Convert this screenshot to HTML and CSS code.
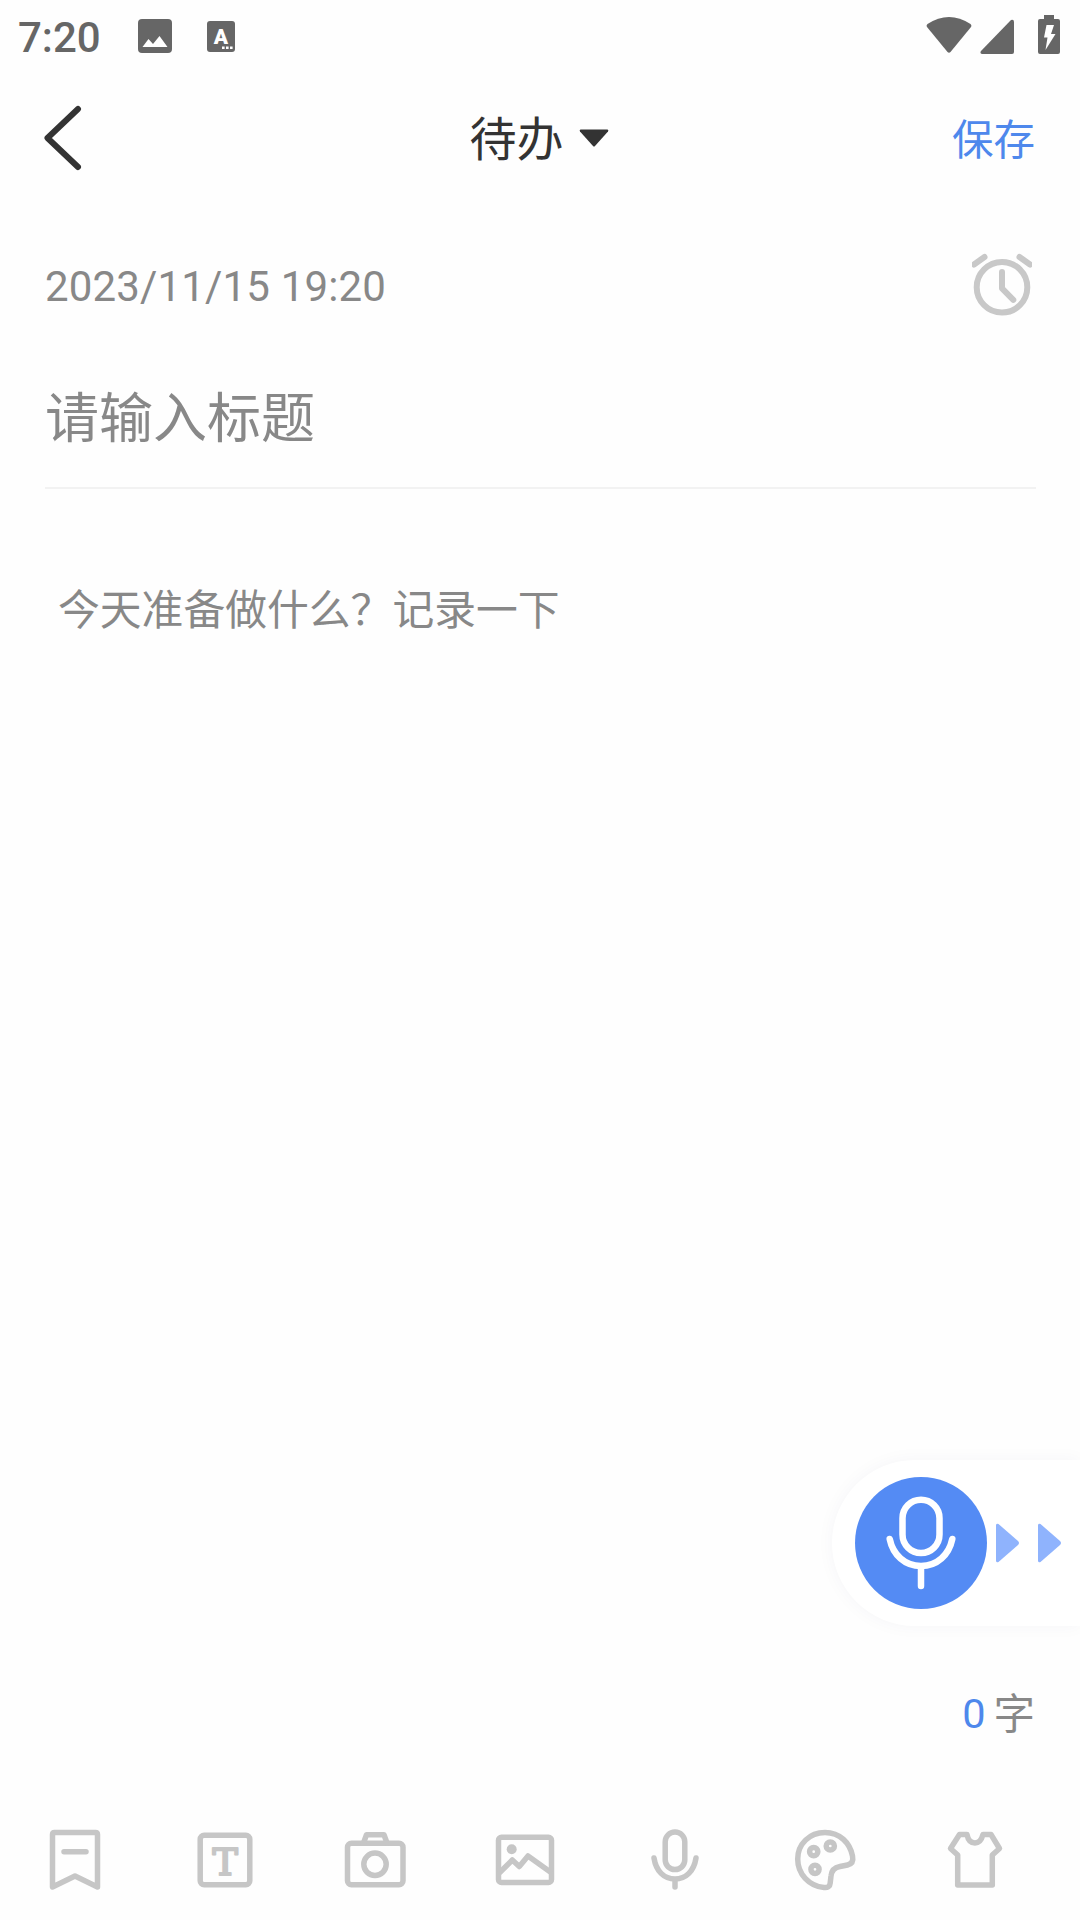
FILE: index.html
```html
<!DOCTYPE html>
<html lang="zh-CN">
<head>
    <meta charset="UTF-8">
    <meta name="viewport" content="width=device-width, initial-scale=1.0">
    <title>待办</title>
    <link rel="stylesheet" href="styles.css">
</head>
<body>

<div class="status-bar">
    <span class="time">7:20</span>
    <svg class="status-image" width="34" height="34" viewBox="0 0 34 34">
        <rect width="34" height="34" rx="4" fill="#666"/>
        <path d="M4.5 28 L10.5 20 L15 25 L21.5 17 L29.5 28 Z" fill="#fff"/>
    </svg>
    <svg class="status-input" width="28" height="31" viewBox="0 0 28 31">
        <rect width="28" height="31" rx="3" fill="#666"/>
        <text x="14" y="22.5" class="letter-a">A</text>
        <path d="M15 25.5h2.6v2.6H15z M19 25.5h2.6v2.6H19z M23 25.5h2.6v2.6H23z" fill="#fff"/>
    </svg>
    <div class="status-right">
        <svg width="46" height="38" viewBox="0 0 46 38">
            <path d="M1.5 8 Q23 -6 44.5 8 Q46 9.500 45 11 L24.500 36 Q23 37.500 21.500 36 L1 11 Q0 9.500 1.500 8 Z" fill="#666"/>
        </svg>
        <svg width="34" height="36" viewBox="0 0 34 36">
            <path d="M1 33 L31 2 Q34 1 34 4 V34 Q34 36 32 36 H2 Q-0.500 35.500 1 33 Z" fill="#666"/>
        </svg>
        <svg class="battery" width="22" height="39" viewBox="0 0 22 39">
            <path d="M6 0 H16 V4 H20 Q22 4 22 6 V37 Q22 39 20 39 H2 Q0 39 0 37 V6 Q0 4 2 4 H6 Z" fill="#666"/>
            <path d="M8.500 10 H16 L13 19 H17.500 L7.500 35 L9.500 22.500 H6 Z" fill="#fff"/>
        </svg>
    </div>
</div>

<div class="header">
    <svg class="back" width="40" height="66" viewBox="0 0 40 66">
        <path d="M35 4 L4.500 33 L35 62"/>
    </svg>
    <div class="category">
        <span class="name">待办</span>
        <svg width="30" height="18" viewBox="0 0 30 18">
            <path d="M1.500 0.500 H28.500 Q30 1 29 2.500 L16 17 Q15 18 14 17 L1 2.500 Q0 1 1.500 0.500 Z" fill="#333"/>
        </svg>
    </div>
    <span class="save">保存</span>
</div>

<div class="editor">
    <div class="date-row">
        <span class="date">2023/11/15 19:20</span>
        <svg class="alarm" width="60" height="70" viewBox="0 0 60 70">
            <circle cx="30" cy="35.300" r="25.300"/>
            <path d="M30 20 V36.300 L41.300 47.800"/>
            <path d="M2 12.500 L12.500 5 M47.500 5 L58 12.500"/>
        </svg>
    </div>
    <div class="title-input">请输入标题</div>
    <div class="content-input">今天准备做什么？记录一下</div>
</div>

<div class="voice">
    <div class="voice-btn">
        <svg width="132" height="132" viewBox="0 0 132 132">
            <rect x="47.500" y="22.700" width="37" height="53.300" rx="18.500"/>
            <path d="M34.700 62 C38 78 50 89 66 89 S94 78 97.300 62 M66 89 V109"/>
        </svg>
    </div>
    <svg class="arrows" width="66" height="40" viewBox="0 0 66 40">
        <path d="M0 2 Q0.500 0 2.500 1 L22 18 Q24 20 22 22 L2.500 39 Q0.500 40 0 38 Z"/>
        <path d="M42 2 Q42.500 0 44.500 1 L64 18 Q66 20 64 22 L44.500 39 Q42.500 40 42 38 Z"/>
    </svg>
</div>

<div class="count"><span class="number">0</span><span class="unit">字</span></div>

<div class="toolbar">
    <svg viewBox="0 0 90 90">
        <path d="M22.500 72 V19.500 Q22.500 17.500 24.500 17.500 H65.500 Q67.500 17.500 67.500 19.500 V72 L45 61 Z"/>
        <path d="M34 36.700 H56"/>
    </svg>
    <svg viewBox="0 0 90 90">
        <rect x="20.200" y="20.200" width="49.600" height="49.600" rx="4"/>
        <text x="45.200" y="60" class="letter-t">T</text>
    </svg>
    <svg viewBox="0 0 90 90">
        <rect x="17.500" y="28.200" width="55.500" height="41.600" rx="4"/>
        <path d="M33.500 28 L36.500 19.800 H54 L57 28"/>
        <circle cx="45" cy="49.300" r="11.200"/>
    </svg>
    <svg viewBox="0 0 90 90">
        <rect x="18.500" y="22.200" width="53" height="45.300" rx="3"/>
        <circle cx="31.700" cy="34.300" r="5" class="solid"/>
        <path d="M20 57.300 L32.300 45 L39.300 51.500 L48 41 L70 56.700"/>
    </svg>
    <svg viewBox="0 0 90 90">
        <rect x="35.200" y="17" width="19.600" height="37.600" rx="9.800"/>
        <path d="M24 43 C26 56 34 64 45 64 S64 56 66 43 M45 64 V72"/>
    </svg>
    <svg viewBox="0 0 90 90">
        <path d="M45 17.500 C60 17.500 70 28 72.500 41 C73.500 46 72 49 67.500 50 L60 51.500 C54.500 52.500 51.500 55.500 51 61 L50.200 68 C50 71.500 47.500 73 44 72.500 C29 71 17.700 59 17.700 44 C17.700 29 29.500 17.500 45 17.500 Z"/>
        <circle cx="33.700" cy="36.700" r="4.100"/>
        <circle cx="50.300" cy="31" r="4.100"/>
        <circle cx="35" cy="54.300" r="4.100"/>
    </svg>
    <svg viewBox="0 0 90 90">
        <path d="M29.500 19.500 H37 C38 25 41 28 45 28 S51.500 25 53 19.500 H61 L69.500 33.500 L62.300 40 V70 H27.700 V40 L20.500 33.500 Z"/>
    </svg>
</div>

</body>
</html>
```
FILE: styles.css
```css
body {
    margin: 0;
    width: 1080px;
    height: 1920px;
    display: flex;
    flex-direction: column;
    overflow: hidden;
    background-color: #fefefe;
    font-family: Roboto, "Noto Sans CJK SC", sans-serif;
    color: #888;
}
svg {
    display: block;
    flex: none;
}

/* Status bar */
.status-bar {
    height: 72px;
    display: flex;
    align-items: center;
    padding: 0 20px 0 18px;
    box-sizing: border-box;
    color: #666;
}
.time {
    width: 120px;
    padding-top: 4px;
    font-size: 42px;
    font-weight: 500;
    line-height: 74px;
}
.status-input {
    margin-left: 35px;
}
.letter-a {
    font-size: 21px;
    font-weight: 900;
    text-anchor: middle;
    fill: #fff;
}
.status-right {
    display: flex;
    align-items: flex-end;
    gap: 8px;
    height: 39px;
    margin-left: auto;
    margin-bottom: 3px;
}
.battery {
    margin-left: 16px;
}

/* Header */
.header {
    height: 132px;
    display: flex;
    align-items: center;
    justify-content: space-between;
    padding: 0 45px 0 43px;
}
.back {
    width: 40px;
    margin-right: 44px;
    fill: none;
    stroke: #333;
    stroke-width: 6;
    stroke-linecap: round;
    stroke-linejoin: round;
}
.category {
    display: flex;
    align-items: center;
    gap: 16px;
    font-size: 47px;
    color: #333;
}
.category .name {
    padding-bottom: 5px;
}
.save {
    padding-bottom: 3px;
    font-size: 41.5px;
    color: #4e88ec;
}

/* Editor */
.editor {
    flex: 1;
    padding: 0 44px 0 45px;
}
.date-row {
    height: 164px;
    display: flex;
    align-items: center;
    justify-content: space-between;
}
.date {
    font-size: 42px;
    letter-spacing: 0.16px;
}
.alarm {
    margin-top: 2px;
    margin-right: 4px;
    fill: none;
    stroke: #c8c8c8;
    stroke-width: 6;
    stroke-linecap: round;
    stroke-linejoin: round;
}
.title-input {
    height: 119px;
    line-height: 104px;
    font-size: 54px;
    border-bottom: 2px solid #f2f2f2;
}
.content-input {
    padding: 91px 12px 0 13px;
    font-size: 41.8px;
    line-height: 62px;
}

/* Voice input */
.voice {
    align-self: flex-end;
    display: flex;
    align-items: center;
    width: 248px;
    height: 166px;
    padding-left: 23px;
    box-sizing: border-box;
    border-radius: 83px 0 0 83px;
    background-color: #fff;
    box-shadow: 0 0 18px rgba(60, 60, 110, 0.04);
}
.voice-btn {
    width: 132px;
    height: 132px;
    border-radius: 50%;
    background-color: #548bf4;
}
.voice-btn svg {
    fill: none;
    stroke: #fff;
    stroke-width: 6.5;
    stroke-linecap: round;
}
.arrows {
    margin-left: 9px;
    fill: #8fb3fd;
}

/* Word count */
.count {
    height: 174px;
    display: flex;
    align-items: center;
    justify-content: flex-end;
    gap: 8px;
    padding-right: 45px;
    font-size: 41.5px;
}
.number {
    color: #4e88ec;
}
.count .unit {
    padding-bottom: 5px;
}

/* Bottom toolbar */
.toolbar {
    height: 120px;
    display: flex;
    align-items: center;
    gap: 60px;
    padding-left: 30px;
}
.toolbar svg {
    width: 90px;
    height: 90px;
    fill: none;
    stroke: #c6c6c6;
    stroke-width: 5.5;
    stroke-linecap: round;
    stroke-linejoin: round;
}
.toolbar .solid {
    fill: #c6c6c6;
    stroke: none;
}
.toolbar .letter-t {
    font-family: "DejaVu Serif", serif;
    font-size: 38px;
    text-anchor: middle;
    fill: #c6c6c6;
    stroke-width: 2;
}
```
